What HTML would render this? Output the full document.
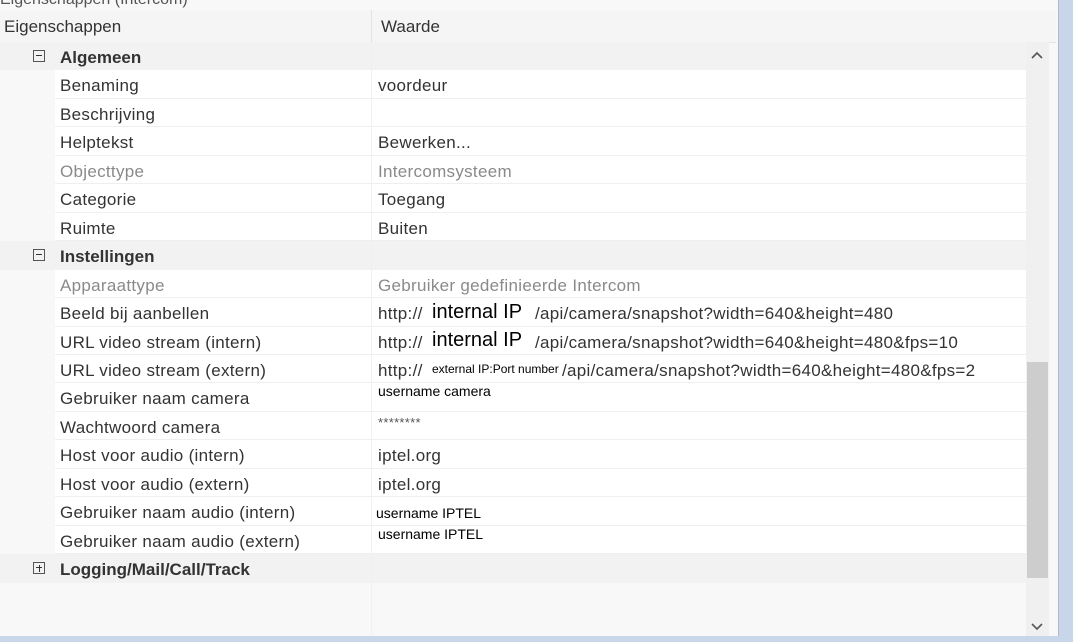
<!DOCTYPE html><html><head><style>
body{margin:0;width:1073px;height:642px;overflow:hidden;background:#c9d6ea;font-family:"Liberation Sans",sans-serif;position:relative}
#p{position:absolute;left:0;top:0;width:1058px;height:636px;background:#f8f8f8;border-right:1px solid #aeb9cc}
.t{position:absolute;white-space:nowrap}
.r{position:absolute;left:0;width:1026px;height:28px}
.c{background:#f2f2f2}
.w{position:absolute;left:55px;right:0;top:0;bottom:0;background:#fff;border-bottom:1px solid #efefef}
.n{position:absolute;left:60px;top:6px;font-size:17px;letter-spacing:0.3px;color:#333;white-space:nowrap}
.v{position:absolute;left:378px;top:6px;font-size:17px;letter-spacing:0.3px;color:#333;white-space:nowrap}
.g{color:#8a8a8a}
.b{font-weight:bold;left:60px;letter-spacing:0}
.box{position:absolute;left:33px;top:8px;width:12px;height:12px;border:1px solid #555;box-sizing:border-box}
.box:before{content:"";position:absolute;left:2px;top:4px;width:6px;height:1px;background:#333}
.plus:after{content:"";position:absolute;left:4.5px;top:1.5px;width:1px;height:7px;background:#333}
.s{font-size:14px;color:#000;letter-spacing:0}
</style></head><body><div id="p">
<div class="t" style="left:0;top:-9px;font-size:16px;color:#555">Eigenschappen (Intercom)</div>
<div style="position:absolute;left:0;top:10px;width:1056px;height:32px;background:#f5f5f5;border-bottom:1px solid #e2e2e2"></div>
<div style="position:absolute;left:371px;top:10px;width:1px;height:32px;background:#e2e2e2"></div>
<div class="t" style="left:4px;top:17px;font-size:17px;color:#333">Eigenschappen</div>
<div class="t" style="left:381px;top:17px;font-size:17px;color:#333">Waarde</div>
<div id="rows"></div>
<div style="position:absolute;left:371px;top:42px;width:1px;height:594px;background:#f0f0f0"></div>
<div style="position:absolute;left:1026px;top:42px;width:23px;height:594px;background:#f0f0f0"></div>
<div style="position:absolute;left:1027px;top:362px;width:21px;height:216px;background:#cdcdcd"></div>
<svg style="position:absolute;left:1031px;top:51px" width="12" height="10"><path d="M1 7 L6 2 L11 7" stroke="#555" stroke-width="1.6" fill="none"/></svg>
<svg style="position:absolute;left:1031px;top:622px" width="12" height="10"><path d="M1 2 L6 7 L11 2" stroke="#555" stroke-width="1.6" fill="none"/></svg>
</div>
<script>
var d=[["c","Algemeen"],["","Benaming","voordeur"],["","Beschrijving",""],["","Helptekst","Bewerken..."],["g","Objecttype","Intercomsysteem"],["","Categorie","Toegang"],["","Ruimte","Buiten"],["c","Instellingen"],["g","Apparaattype","Gebruiker gedefinieerde Intercom"],["","Beeld bij aanbellen","http://<span style='position:absolute;left:54px;top:-3px;font-size:20px;color:#000;letter-spacing:0'>internal IP</span><span style='position:absolute;left:157px'>/api/camera/snapshot?width=640&amp;height=480</span>"],["","URL video stream (intern)","http://<span style='position:absolute;left:54px;top:-4px;font-size:20px;color:#000;letter-spacing:0'>internal IP</span><span style='position:absolute;left:157px'>/api/camera/snapshot?width=640&amp;height=480&amp;fps=10</span>"],["","URL video stream (extern)","http://<span style='position:absolute;left:54px;top:1px;font-size:12px;color:#000;letter-spacing:0'>external IP:Port number</span><span style='position:absolute;left:184px'>/api/camera/snapshot?width=640&amp;height=480&amp;fps=2</span>"],["","Gebruiker naam camera","<span class='s' style='position:relative;top:-8px'>username camera</span>"],["","Wachtwoord camera","<span style='position:relative;top:-6px;font-size:13px;color:#555'>********</span>"],["","Host voor audio (intern)","iptel.org"],["","Host voor audio (extern)","iptel.org"],["","Gebruiker naam audio (intern)","<span class='s' style='position:relative;left:-2px'>username IPTEL</span>"],["","Gebruiker naam audio (extern)","<span class='s' style='position:relative;top:-8px'>username IPTEL</span>"],["p","Logging/Mail/Call/Track"]];
var h="";d.forEach(function(e,i){var top=Math.round(42+i*28.45);var nt=Math.round(42+(i+1)*28.45);var hh=nt-top;
if(e[0]=="c"||e[0]=="p"){h+="<div class='r c' style='top:"+top+"px;height:"+hh+"px'><div class='box "+(e[0]=="p"?"plus":"")+"'></div><div class='n b'>"+e[1]+"</div></div>";}
else{h+="<div class='r' style='top:"+top+"px;height:"+hh+"px;background:#f8f8f8'><div class='w'></div><div class='n "+e[0]+"'>"+e[1]+"</div><div class='v "+e[0]+"'>"+e[2]+"</div></div>";}});
document.getElementById("rows").innerHTML=h;
</script>
</body></html>
